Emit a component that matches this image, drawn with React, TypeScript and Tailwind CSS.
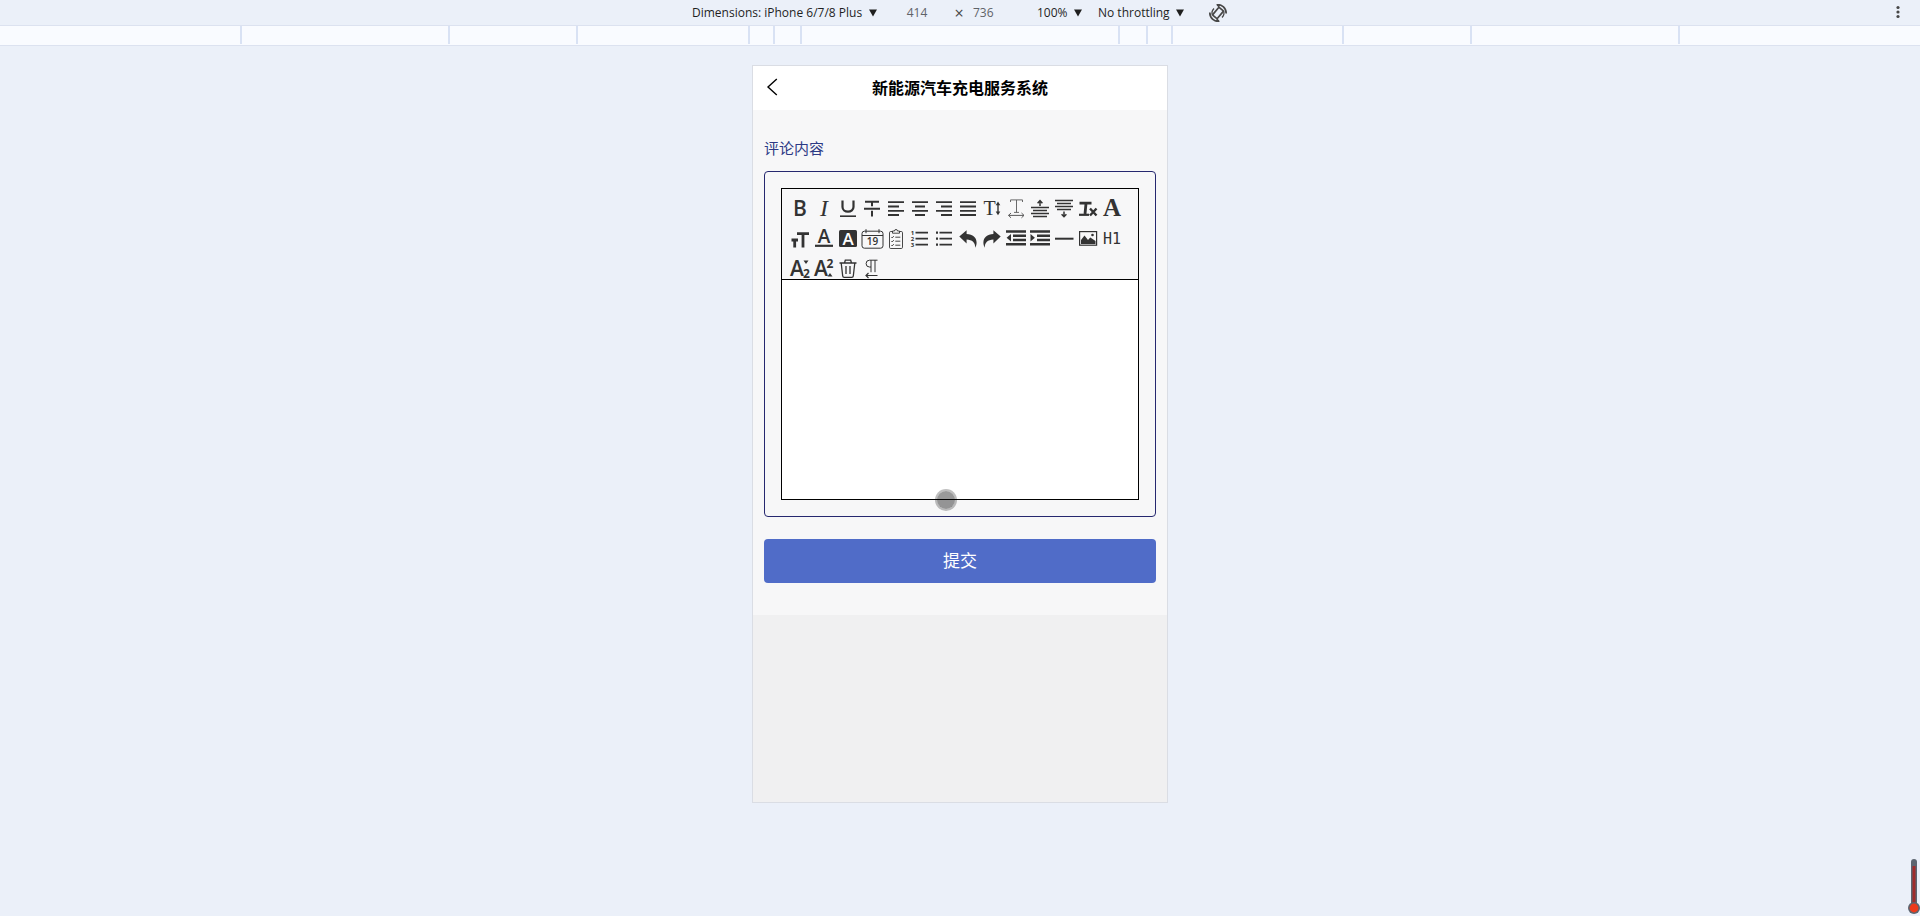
import React, { useState } from 'react';

interface Tool {
  name: string;
  icon: React.ReactNode;
}

const SANS = 'Open Sans, sans-serif';
const SERIF = 'Liberation Serif, serif';

// Stroked lines share one path helper
function Lines({ d, w = 1.6 }: { d: string; w?: number }) {
  return <path d={d} fill="none" stroke="currentColor" strokeWidth={w} />;
}

function Letter({ x = 10, y, size, weight = 400, family = SANS, fill = 'currentColor', italic = false, children }: {
  x?: number;
  y: number;
  size: number;
  weight?: number;
  family?: string;
  fill?: string;
  italic?: boolean;
  children: string;
}) {
  return (
    <text
      x={x}
      y={y}
      fontSize={size}
      fontWeight={weight}
      fontFamily={family}
      fontStyle={italic ? 'italic' : 'normal'}
      fill={fill}
      textAnchor="middle"
    >
      {children}
    </text>
  );
}

const tools: Tool[] = [
  { name: 'Bold', icon: <Letter y={17} size={21} weight={600}>B</Letter> },
  { name: 'Italic', icon: <Letter y={17} size={24} family={SERIF} italic>I</Letter> },
  {
    name: 'Underline',
    icon: (
      <>
        <Lines d="M4.5 1.5v6.5a5.5 4.7 0 0 0 11 0V1.5" w={2.2} />
        <Lines d="M2 17.2h16" w={1.6} />
      </>
    ),
  },
  {
    name: 'Strikethrough',
    icon: <Lines d="M3 2.7h14M2 9.8h16M10 2.7v4.6M10 11.8v5.7" w={2} />,
  },
  { name: 'Align left', icon: <Lines d="M2 3.2h16M2 7.5h11M2 11.8h16M2 16h11" w={1.8} /> },
  { name: 'Align center', icon: <Lines d="M2 3.2h16M5 7.5h10M2 11.8h16M5 16h10" w={1.8} /> },
  { name: 'Align right', icon: <Lines d="M2 3.2h16M7 7.5h11M2 11.8h16M7 16h11" w={1.8} /> },
  { name: 'Justify', icon: <Lines d="M2 3.2h16M2 7.5h16M2 11.8h16M2 16h16" w={1.8} /> },
  {
    name: 'Line height',
    icon: (
      <>
        <Letter x={7.5} y={16} size={20} family={SERIF}>T</Letter>
        <Lines d="M16 5v9" w={1.4} />
        <path d="M16 2.6l2.3 3.6h-4.6zM16 16.2l2.3-3.6h-4.6z" fill="currentColor" />
      </>
    ),
  },
  {
    name: 'Letter spacing',
    icon: (
      <g opacity="0.8">
        <Lines d="M4.5 3V.9h12V3M10.5 1v12.4M8 13.4h5" w={0.9} />
        <Lines d="M2.5 16.4h15.5M5 14l-2.5 2.4L5 18.800M15.500 14l2.500 2.400-2.500 2.400" w={1} />
      </g>
    ),
  },
  {
    name: 'Space before',
    icon: (
      <>
        <Lines d="M1 8.500h18M3 11.500h14M1 14.500h18M3 17.500h14" w={1.400} />
        <Lines d="M10 7V2M7.600 4.200L10 1.700l2.400 2.500" w={1.500} />
      </>
    ),
  },
  {
    name: 'Space after',
    icon: (
      <>
        <Lines d="M1 1.500h18M3 4.500h14M1 7.500h18M3 10.500h14" w={1.500} />
        <Lines d="M10 12.500v5M7.600 15.200l2.400 2.500 2.400-2.500" w={1.500} />
      </>
    ),
  },
  {
    name: 'Clear format',
    icon: (
      <>
        <Lines d="M1.500 4.200h12M8 4.500L7 15" w={2.800} />
        <Lines d="M1 15.800h10" w={2.200} />
        <Lines d="M12 9.500l6.500 7M18.500 9.500l-6.500 7" w={2.400} />
      </>
    ),
  },
  { name: 'Font family', icon: <Letter y={17} size={25} weight={700} family={SERIF}>A</Letter> },
  {
    name: 'Font size',
    icon: <Lines d="M7 4.600h12M13 4.600V18.600M1.500 11h6.500M4.700 11v7.600" w={2.800} />,
  },
  {
    name: 'Text color',
    icon: (
      <>
        <Letter y={13.500} size={19} weight={600}>A</Letter>
        <Lines d="M1 16.800h18" w={2.200} />
      </>
    ),
  },
  {
    name: 'Background color',
    icon: (
      <>
        <rect x="1" y="1" width="18" height="17" rx="1.500" fill="currentColor" />
        <Letter y={15.500} size={17} weight={600} fill="#fff">A</Letter>
      </>
    ),
  },
  {
    name: 'Insert date',
    icon: (
      <>
        <rect x="0" y="2.200" width="21" height="17" rx="2.400" fill="none" stroke="currentColor" />
        <Lines d="M0 6.500h21M4 .200v4M17 .200v4" w={1} />
        <Letter x={10.500} y={16} size={10} weight={600}>19</Letter>
      </>
    ),
  },
  {
    name: 'Check list',
    icon: (
      <>
        <rect x="3.500" y="2.500" width="13" height="17" rx="1.200" fill="none" stroke="currentColor" strokeWidth="0.900" />
        <path d="M6.500 4.200V2h2a1.500 1.500 0 0 1 3 0h2v2.200z" fill="#f6f6f6" stroke="currentColor" strokeWidth="0.900" />
        <Lines d="M5.300 8l.9.9 1.600-1.800M5.300 12l.9.9 1.600-1.800M5.300 16l.9.9 1.600-1.800M9.300 8.200h5M9.300 12.200h5M9.300 16.200h5" w={0.9} />
      </>
    ),
  },
  {
    name: 'Ordered list',
    icon: (
      <>
        <Lines d="M5.500 3.700h12.500M5.500 9.700h12.500M5.500 15.700h12.500" w={1.700} />
        <Letter x={2.4} y={5.6} size={6} weight={700}>1</Letter>
        <Letter x={2.4} y={11.8} size={6} weight={700}>2</Letter>
        <Letter x={2.4} y={18} size={6} weight={700}>3</Letter>
      </>
    ),
  },
  {
    name: 'Bullet list',
    icon: (
      <>
        <Lines d="M5.500 3.700h12.500M5.500 9.700h12.500M5.500 15.700h12.500" w={1.700} />
        <path d="M2 2.600h2v2.200H2zM2 8.600h2v2.200H2zM2 14.600h2v2.200H2z" fill="currentColor" />
      </>
    ),
  },
  {
    name: 'Undo',
    icon: <path d="M1.300 7.600L8.600 1.200v3.900c6.200.3 10 3.600 10 8.400 0 2-.5 3.700-1.400 5.200.2-5-2.900-8-8.600-8.200v3.900z" fill="currentColor" />,
  },
  {
    name: 'Redo',
    icon: <path d="M18.700 7.600L11.400 1.200v3.900c-6.200.3-10 3.600-10 8.400 0 2 .5 3.700 1.400 5.200-.2-5 2.900-8 8.600-8.200v3.900z" fill="currentColor" />,
  },
  {
    name: 'Outdent',
    icon: (
      <>
        <Lines d="M0 2.500h20M7 6.700h13M7 10.900h13M0 15.200h20" w={2.500} />
        <path d="M5 5v7.600L.6 8.800z" fill="currentColor" />
      </>
    ),
  },
  {
    name: 'Indent',
    icon: (
      <>
        <Lines d="M0 2.500h20M7 6.700h13M7 10.900h13M0 15.200h20" w={2.500} />
        <path d="M.5 5v7.600l4.400-3.800z" fill="currentColor" />
      </>
    ),
  },
  { name: 'Divider', icon: <Lines d="M1 9.700h18.500" w={2} /> },
  {
    name: 'Insert image',
    icon: (
      <>
        <rect x="1.600" y="2.600" width="17" height="13.600" fill="none" stroke="currentColor" strokeWidth="1.200" />
        <path d="M3 15v-4l3.500-4.500 3.500 4.500 2.300-2.400L17.500 12v3z" fill="currentColor" />
        <circle cx="14.500" cy="6" r="1.300" fill="currentColor" />
      </>
    ),
  },
  { name: 'Heading', icon: <Letter y={15} size={15} family="DejaVu Sans Mono, monospace">H1</Letter> },
  {
    name: 'Subscript',
    icon: (
      <>
        <Letter x={7} y={17} size={21} weight={600}>A</Letter>
        <Letter x={16.5} y={18.5} size={12} weight={700}>2</Letter>
        <path d="M13.500 1.500h5L16 5z" fill="currentColor" />
      </>
    ),
  },
  {
    name: 'Superscript',
    icon: (
      <>
        <Letter x={7} y={17} size={21} weight={600}>A</Letter>
        <Letter x={16} y={9} size={12} weight={700}>2</Letter>
        <path d="M13.500 17.500h5L16 14z" fill="currentColor" />
      </>
    ),
  },
  {
    name: 'Clear',
    icon: (
      <>
        <Lines d="M1.500 4h17M6.500 4l.8-2.800h5.400l.8 2.800M3.200 4l1.500 13a1.500 1.500 0 0 0 1.500 1.300h7.600a1.500 1.500 0 0 0 1.500-1.300l1.500-13" w={1.3} />
        <Lines d="M8 7v8M12 7v8" w={1.3} />
      </>
    ),
  },
  {
    name: 'Direction',
    icon: (
      <>
        <Lines d="M15.500 1.200H7.500a3.300 3.300 0 0 0 0 6.800h1.500M9 1.200v12M13 1.200v12" w={1} />
        <Lines d="M4 16.500h11.500M6.500 14L4 16.500 6.500 19" w={1.2} />
      </>
    ),
  },
];

function Caret() {
  return (
    <svg viewBox="0 0 8 8" className="pointer-events-none h-2 w-2" fill="#1f1f1f" aria-hidden="true">
      <path d="M0 .5h8L4 7.500z" />
    </svg>
  );
}

function DeviceSelect({ label, value }: { label: string; value: string }) {
  return (
    <div className="flex items-center gap-1.5">
      <select aria-label={label} className="appearance-none bg-transparent text-[#1f1f1f] outline-none">
        <option>{value}</option>
      </select>
      <Caret />
    </div>
  );
}

function DeviceToolbar() {
  const [width, setWidth] = useState('414');
  const [height, setHeight] = useState('736');

  return (
    <div className="relative flex h-[25px] items-center justify-center font-['Open_Sans',sans-serif] text-xs">
      <DeviceSelect label="Device" value="Dimensions: iPhone 6/7/8 Plus" />
      <input
        aria-label="Width"
        value={width}
        onChange={(e) => setWidth(e.target.value)}
        className="ml-2 w-16 bg-transparent text-center text-[#5f6368] outline-none"
      />
      <span className="w-5 text-center text-base leading-4 text-[#474747]">×</span>
      <input
        aria-label="Height"
        value={height}
        onChange={(e) => setHeight(e.target.value)}
        className="mr-5 w-12 bg-transparent pl-1 text-[#5f6368] outline-none"
      />
      <div className="flex items-center gap-4">
        <DeviceSelect label="Zoom" value="100%" />
        <DeviceSelect label="Throttling" value="No throttling" />
      </div>
      <button aria-label="Rotate" className="ml-6">
        <svg viewBox="0 0 20 20" className="h-5 w-5" fill="none" stroke="#474747" strokeWidth="1.7">
          <rect x="7" y="5" width="6" height="10" rx="1" transform="rotate(40 10 10)" />
          <path d="M9 1.800C14 1.300 18.200 5 18.200 10.500M11 18.200C6 18.700 1.800 15 1.800 9.500" />
          <path d="M8 1.600l4.500-.6-1.500 4zM12 18.400l-4.500.6 1.500-4z" fill="#474747" stroke="none" />
          <path d="M15.500 7.500c1 2.500.5 5-1.500 7M4.500 12.500c-1-2.500-.5-5 1.500-7" strokeWidth="1.300" />
        </svg>
      </button>
      <button aria-label="More options" className="absolute right-4 top-1">
        <svg viewBox="0 0 12 16" className="h-4 w-3" fill="#474747">
          <circle cx="6" cy="3.500" r="1.600" />
          <circle cx="6" cy="8" r="1.600" />
          <circle cx="6" cy="12.500" r="1.600" />
        </svg>
      </button>
    </div>
  );
}

// Media query ruler, one nested box per breakpoint
function Ruler() {
  const box = 'flex h-[18px] shrink-0 justify-center border-x-2 border-[#d9e2f4]';
  return (
    <div className="flex h-[21px] justify-center overflow-hidden border-y border-[#dce2f0] bg-[#f9fbff]">
      <div className={`${box} w-[1440px]`}>
        <div className={`${box} w-[1024px]`}>
          <div className={`${box} w-[768px]`}>
            <div className={`${box} w-[425px]`}>
              <div className={`${box} w-[375px]`}>
                <div className={`${box} w-[320px]`} />
              </div>
            </div>
          </div>
        </div>
      </div>
    </div>
  );
}

function Editor() {
  return (
    <div className="rounded border border-[#26286f] p-4">
      <div className="relative border border-black">
        <div className="flex flex-wrap gap-x-1 gap-y-[10px] border-b border-black pl-2 pt-[10px]">
          {tools.map((tool) => (
            <button key={tool.name} type="button" aria-label={tool.name} className="h-5 w-5 text-[#333]">
              <svg viewBox="0 0 20 20" className="h-5 w-5 overflow-visible">
                {tool.icon}
              </svg>
            </button>
          ))}
        </div>
        <textarea
          id="comment"
          className="block h-[219px] w-full resize-none bg-white p-2 text-base outline-none"
        />
        {/* touch pointer */}
        <div className="absolute -bottom-3 left-[153px] h-[22px] w-[22px] rounded-full border-2 border-black/25 bg-black/40 bg-clip-padding" />
      </div>
    </div>
  );
}

function Phone() {
  return (
    <main className="mx-auto mt-[19px] flex min-h-[738px] w-[416px] flex-col border border-[#dadde4] bg-[#f0f0f1] font-['Noto_Sans_CJK_SC',sans-serif]">
      <header className="grid h-11 grid-cols-[38px_1fr_38px] items-center bg-white pb-0.5">
        <button aria-label="Back" className="flex justify-center">
          <svg viewBox="0 0 12 18" className="h-[18px] w-3" fill="none" stroke="#000" strokeWidth="1.4">
            <path d="M10.800 1L2 9l8.800 8" />
          </svg>
        </button>
        <h1 className="text-center text-base font-bold leading-6 text-black">新能源汽车充电服务系统</h1>
      </header>
      <form className="bg-[#f7f7f8] px-[11px] pb-8 pt-[26px]" onSubmit={(e) => e.preventDefault()}>
        <label htmlFor="comment" className="mb-[11px] block text-[15px] leading-6 text-[#2d3a85]">
          评论内容
        </label>
        <Editor />
        <button type="submit" className="mt-[22px] h-11 w-full rounded bg-[#506cc8] pb-0.5 text-[17px] text-white">
          提交
        </button>
      </form>
    </main>
  );
}

export default function App() {
  return (
    <div className="relative min-h-screen overflow-hidden bg-[#ebf0f9]">
      <DeviceToolbar />
      <Ruler />
      <Phone />
      <svg viewBox="0 0 12 58" className="absolute bottom-0 right-0 h-[58px] w-3" aria-hidden="true">
        <rect x="3" y="1" width="6" height="50" rx="3" fill="#5c6570" />
        <rect x="4.500" y="8" width="3" height="40" fill="#a02c2c" />
        <circle cx="6" cy="50" r="6" fill="#5c6570" />
        <circle cx="6" cy="50" r="4.400" fill="#ec3a1c" />
      </svg>
    </div>
  );
}
